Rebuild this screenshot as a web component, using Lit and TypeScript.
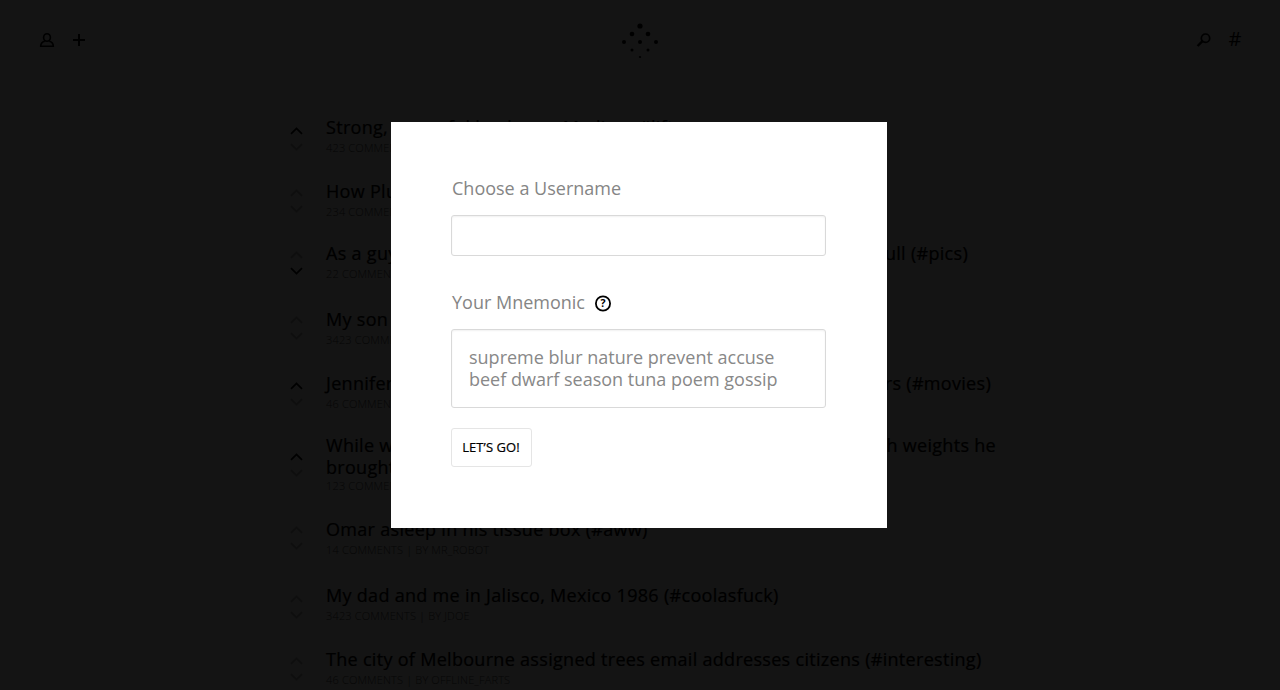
import { LitElement, html, css, svg } from "lit";
import { customElement } from "lit/decorators.js";

interface Post { lines: string[][]; width: number; meta: string; vote: "" | "up" | "down"; voteTop: number; height: number; }

const posts: Post[] = [
  { height: 64, voteTop: 11, width: 349, lines: [["Strong, powerful leader on Medium #lifts"]], meta: "423 COMMENTS | BY JDOE", vote: "up" },
  { height: 62, voteTop: 9, width: 300, lines: [["How Pluto"]], meta: "234 COMMENTS | BY JDOE", vote: "" },
  { height: 66, voteTop: 9, width: 642, lines: [["As a guy", "skull (#pics)"]], meta: "22 COMMENTS | BY JDOE", vote: "down" },
  { height: 64, voteTop: 8, width: 300, lines: [["My son drew"]], meta: "3423 COMMENTS | BY JDOE", vote: "" },
  { height: 62, voteTop: 10, width: 665, lines: [["Jennifer", "stars (#movies)"]], meta: "46 COMMENTS | BY JDOE", vote: "up" },
  { height: 84, voteTop: 19, width: 670, lines: [["While w", "with weights he"], ["brought"]], meta: "123 COMMENTS | BY JDOE", vote: "up" },
  { height: 66, voteTop: 8, width: 670, lines: [["Omar asleep in his tissue box (#aww)"]], meta: "14 COMMENTS | BY MR_ROBOT", vote: "" },
  { height: 64, voteTop: 11, width: 670, lines: [["My dad and me in Jalisco, Mexico 1986 (#coolasfuck)"]], meta: "3423 COMMENTS | BY JDOE", vote: "" },
  { height: 64, voteTop: 9, width: 670, lines: [["The city of Melbourne assigned trees email addresses citizens (#interesting)"]], meta: "46 COMMENTS | BY OFFLINE_FARTS", vote: "" },
];

@customElement("app-root")
export class AppRoot extends LitElement {
  static styles = css`
    :host { display: block; width: 1280px; height: 690px; position: relative; overflow: hidden; background: #141414; color: #000; font-family: "Open Sans", "Noto Sans", sans-serif; }
    * { box-sizing: border-box; }
    header { display: grid; grid-template-columns: 1fr 40px 1fr; height: 117px; padding: 22px 37px 0 38px; }
    header > svg { margin-left: -0.5px; }
    .tools { display: flex; gap: 14px; height: 36px; align-items: center; }
    .right { justify-content: flex-end; }
    svg { display: block; flex: none; }
    .hash { font-size: 20px; line-height: 34px; height: 36px; width: 16px; text-align: center; }
    .post { display: flex; padding-left: 290px; }
    .votes { width: 36px; flex: none; display: flex; flex-direction: column; gap: 8px; }
    .off { opacity: .25; }
    .line { display: flex; justify-content: space-between; font-size: 18px; letter-spacing: .3px; -webkit-text-stroke: .2px #000; line-height: 21.5px; white-space: pre; }
    .meta { font-size: 11px; letter-spacing: .16px; line-height: 14px; margin-top: 2.5px; color: #060606; font-weight: 300; white-space: pre; }
    .line + .line + .meta { margin-top: .75px; }
    .modal { position: absolute; left: 391px; top: 122px; width: 496px; height: 406px; background: #fff; padding: 53px 61px 0 60px; display: flex; flex-direction: column; }
    .label { display: flex; align-items: center; gap: 9px; height: 25px; padding-left: 1px; font-size: 18px; color: #858585; }
    .label svg { margin-top: 2px; }
    .t { white-space: nowrap; }
    .field { border: 1px solid #d9d9d9; border-radius: 3px; box-shadow: inset 0 1px 2px #0000000f; width: 375px; }
    .input { height: 41px; margin: 15px 0 33px; }
    .words { height: 79px; margin: 15px 0 20px; padding: 17px 17px; font-size: 18px; line-height: 21.5px; color: #888; white-space: pre; }
    .go { width: 81px; height: 39px; border: 1px solid #e5e5e5; border-radius: 3px; background: #fff; padding: 0 1px 2px 0; font: 400 13px "Open Sans"; letter-spacing: .08px; -webkit-text-stroke: .2px #000; color: #000; }
    .q { font: 700 10.5px "Open Sans"; }
  `;

  private chevron(dir: "up" | "down", on: boolean) {
    return html`<svg class=${on ? "" : "off"} width="13" height="8" viewBox="0 0 13 8" fill="none" stroke="#000" stroke-width="1.7"><path d=${dir === "up" ? "M1 6.8 6.5 1.5 12 6.8" : "M1 1.2 6.5 6.5 12 1.2"} /></svg>`;
  }

  render() {
    const dots = [[20, 4, 2.6], [12, 12, 2.3], [28, 12, 2.3], [4, 20, 2], [20, 20, 2], [36, 20, 2], [12, 28, 1.5], [28, 28, 1.5], [20, 35, 1.1]];
    return html`
      <header>
        <div class="tools">
          <svg width="18" height="18" viewBox="0 0 18 18" fill="none" stroke="#000" stroke-width="1.6"><ellipse cx="9" cy="6.5" rx="3.4" ry="3.8"/><path d="M6.8 10.2C4 10.8 2.7 11.8 2.7 15.3H15.3C15.3 11.8 14 10.8 11.2 10.2"/></svg>
          <svg width="18" height="18" viewBox="0 0 18 18" fill="none" stroke="#000" stroke-width="2"><path d="M9 3V15M3 9H15"/></svg>
        </div>
        <svg width="40" height="40" viewBox="0 0 40 40">${dots.map(([x, y, r]) => svg`<circle cx=${x} cy=${y} r=${r}/>`)}</svg>
        <div class="tools right">
          <svg width="18" height="18" viewBox="0 0 18 18" fill="none" stroke="#000" stroke-width="1.7"><circle cx="10.5" cy="7.2" r="4.2"/><path d="M7.5 10.2 2.6 15" stroke-width="2.4"/></svg>
          <span class="hash">#</span>
        </div>
      </header>
      <main>
        ${posts.map((p) => html`<article class="post" style="height:${p.height}px">
          <div class="votes" style="padding-top:${p.voteTop - 1}px">${this.chevron("up", p.vote === "up")}${this.chevron("down", p.vote === "down")}</div>
          <div style="width:${p.width}px">
            ${p.lines.map((l) => html`<div class="line">${l.map((s) => html`<span>${s}</span>`)}</div>`)}
            <div class="meta">${p.meta}</div>
          </div>
        </article>`)}
      </main>
      <section class="modal">
        <div class="label"><span class="t">Choose a Username</span></div>
        <div class="field input"></div>
        <div class="label"><span class="t">Your Mnemonic</span>
          <svg width="18" height="18" viewBox="0 0 18 18"><circle cx="9" cy="9.5" r="7.1" fill="none" stroke="#000" stroke-width="1.8"/><text class="q" x="9" y="13.2" text-anchor="middle">?</text></svg>
        </div>
        <div class="field words">supreme blur nature prevent accuse
beef dwarf season tuna poem gossip</div>
        <button class="go">LET’S GO!</button>
      </section>`;
  }
}
